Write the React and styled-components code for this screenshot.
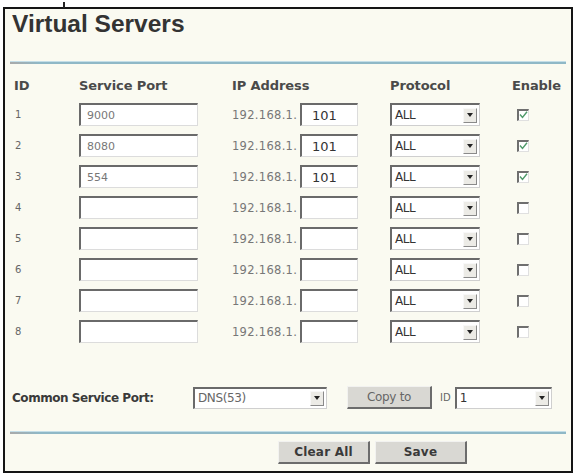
import React from "react";
import styled, { createGlobalStyle } from "styled-components";

const Global = createGlobalStyle`
  html, body { margin: 0; padding: 0; background: #ffffff; }
  body { font-family: "DejaVu Sans", Verdana, sans-serif; }
`;

const Frame = styled.div`
  position: relative;
  box-sizing: border-box;
  width: 570px;
  height: 466px;
  margin: 7px 0 0 3px;
  border: 2px solid #151515;
  background: #fafaf1;
  padding: 1px 0 0 0;
`;

const Tick = styled.span`
  position: absolute;
  left: 58px;
  top: -7px;
  width: 2px;
  height: 6px;
  background: #222;
`;

const Title = styled.h1`
  margin: 0;
  padding-left: 7px;
  font-family: "Liberation Sans", Arial, sans-serif;
  font-weight: 700;
  font-size: 24.5px;
  line-height: 28px;
  color: #333333;
`;

const Rule = styled.div`
  height: 3px;
  margin: ${(p) => p.$top}px 5px 0 5px;
  background: linear-gradient(90deg, #a9a9a9 0px, #8fb8c7 30px, #8fb8c7 100%);
  border-top: 1px solid #c4dee8;
  box-sizing: border-box;
`;

const Grid = styled.div`
  display: grid;
  grid-template-columns: 65px 153px 158px 122px 1fr;
  align-items: center;
  padding-left: 9px;
  height: ${(p) => p.$h}px;
  margin-top: ${(p) => p.$top || 0}px;
`;

const Rows = styled.div`
  margin-top: 4px;
`;

const Head = styled.span`
  font-family: "DejaVu Sans", Verdana, sans-serif;
  font-weight: 700;
  font-size: 13px;
  color: #4a4a4a;
  letter-spacing: -0.1px;
`;

const IdCell = styled.span`
  font-size: 10px;
  color: #666;
  padding-left: 1px;
`;

const TextBox = styled.div`
  box-sizing: border-box;
  width: ${(p) => p.$w}px;
  height: 23px;
  background: #ffffff;
  border-style: solid;
  border-width: 2px 1px 1px 2px;
  border-color: #6a6a6a #dcdcdc #dcdcdc #6a6a6a;
  display: flex;
  align-items: center;
  padding-left: ${(p) => (p.$big ? 10 : 6)}px;
  font-size: ${(p) => (p.$big ? 13 : 11)}px;
  color: ${(p) => (p.$big ? "#333" : "#777")};
`;

const IpWrap = styled.div`
  display: flex;
  align-items: center;
`;

const IpPrefix = styled.span`
  font-size: 11.5px;
  color: #777;
  letter-spacing: 0.3px;
  width: 68px;
`;

const SelectBox = styled.div`
  box-sizing: border-box;
  width: ${(p) => p.$w}px;
  height: ${(p) => p.$h || 23}px;
  background: #ffffff;
  border-style: solid;
  border-width: 2px 1px 1px 2px;
  border-color: #6a6a6a #cfcfcf #cfcfcf #6a6a6a;
  display: flex;
  align-items: center;
  justify-content: space-between;
  padding: 0 2px 0 3px;
  font-size: 12px;
  color: ${(p) => p.$color || "#333"};
  letter-spacing: -0.4px;
`;

const Arrow = styled.span`
  box-sizing: border-box;
  width: 14px;
  height: 15px;
  background: #ecebe6;
  border-style: solid;
  border-width: 1px;
  border-color: #f8f8f8 #8a8a8a #8a8a8a #f8f8f8;
  display: flex;
  align-items: center;
  justify-content: center;
  &::after {
    content: "";
    width: 0;
    height: 0;
    border-left: 3px solid transparent;
    border-right: 3px solid transparent;
    border-top: 4px solid #222;
  }
`;

const Check = styled.span`
  box-sizing: border-box;
  width: 12px;
  height: 12px;
  margin-left: 5px;
  background: #ffffff;
  border-style: solid;
  border-width: 2px 1px 1px 2px;
  border-color: #6f6f6f #e0e0e0 #e0e0e0 #6f6f6f;
  display: flex;
  align-items: center;
  justify-content: center;
`;

const CommonRow = styled.div`
  display: flex;
  align-items: center;
  height: 31px;
  margin-top: 35px;
  padding-left: 7px;
`;

const CommonLabel = styled.span`
  width: 181px;
  font-family: "DejaVu Sans", Verdana, sans-serif;
  font-weight: 700;
  font-size: 12px;
  color: #3a3a3a;
  letter-spacing: -0.45px;
`;

const Button = styled.button`
  box-sizing: border-box;
  width: ${(p) => p.$w}px;
  height: 23px;
  margin-left: ${(p) => p.$ml || 0}px;
  padding: 0;
  background: #d9d8d3;
  border-style: solid;
  border-width: 1px 2px 2px 1px;
  border-color: #f2f2f0 #6c6c6c #6c6c6c #f2f2f0;
  font-family: "DejaVu Sans", Verdana, sans-serif;
  font-size: 12px;
  font-weight: ${(p) => (p.$bold ? 700 : 400)};
  color: ${(p) => (p.$bold ? "#3a3a3a" : "#666")};
  letter-spacing: ${(p) => (p.$bold ? "0.2px" : "-0.3px")};
`;

const IdLabel = styled.span`
  margin: 0 4px 0 8px;
  font-size: 10px;
  color: #666;
`;

const ButtonRow = styled.div`
  display: flex;
  gap: 5px;
  padding-left: 273px;
  margin-top: 7px;
`;

const rows = [
  { id: 1, port: "9000", ip: "101", on: true },
  { id: 2, port: "8080", ip: "101", on: true },
  { id: 3, port: "554", ip: "101", on: true },
  { id: 4, port: "", ip: "", on: false },
  { id: 5, port: "", ip: "", on: false },
  { id: 6, port: "", ip: "", on: false },
  { id: 7, port: "", ip: "", on: false },
  { id: 8, port: "", ip: "", on: false },
];

const Tickmark = () => (
  <svg width="9" height="8" viewBox="0 0 9 8">
    <path d="M1 3.5 L3.5 6.5 L8 0.8" fill="none" stroke="#4f9a6a" strokeWidth="1.4" />
  </svg>
);

export default function App() {
  return (
    <>
      <Global />
      <Frame>
        <Tick />
        <Title>Virtual Servers</Title>
        <Rule $top={23} />
        <Grid $h={20} $top={11}>
          <Head>ID</Head>
          <Head>Service Port</Head>
          <Head>IP Address</Head>
          <Head>Protocol</Head>
          <Head>Enable</Head>
        </Grid>
        <Rows>
          {rows.map((r) => (
            <Grid key={r.id} $h={31}>
              <IdCell>{r.id}</IdCell>
              <TextBox $w={119}>{r.port}</TextBox>
              <IpWrap>
                <IpPrefix>192.168.1.</IpPrefix>
                <TextBox $w={58} $big>
                  {r.ip}
                </TextBox>
              </IpWrap>
              <SelectBox $w={90}>
                ALL
                <Arrow />
              </SelectBox>
              <Check>{r.on ? <Tickmark /> : null}</Check>
            </Grid>
          ))}
        </Rows>
        <CommonRow>
          <CommonLabel>Common Service Port:</CommonLabel>
          <SelectBox $w={134} $h={22} $color="#666">
            DNS(53)
            <Arrow />
          </SelectBox>
          <Button $w={85} $ml={20}>
            Copy to
          </Button>
          <IdLabel>ID</IdLabel>
          <SelectBox $w={97} $h={22}>
            1
            <Arrow />
          </SelectBox>
        </CommonRow>
        <Rule $top={18} />
        <ButtonRow>
          <Button $w={92} $bold>
            Clear All
          </Button>
          <Button $w={92} $bold>
            Save
          </Button>
        </ButtonRow>
      </Frame>
    </>
  );
}
